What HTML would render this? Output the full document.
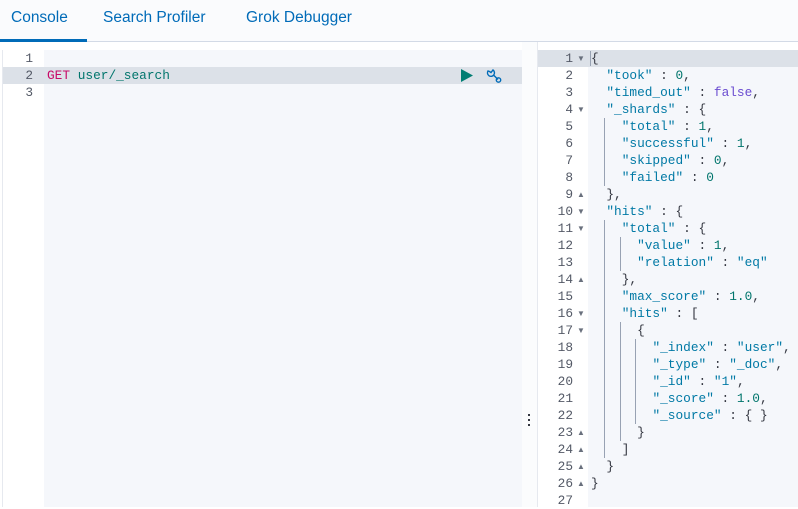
<!DOCTYPE html>
<html><head><meta charset="utf-8"><style>
*{margin:0;padding:0;box-sizing:border-box}
body{width:798px;height:507px;overflow:hidden;background:#fff;font-family:"Liberation Sans",sans-serif;position:relative}
.tabs{position:absolute;left:0;top:0;width:798px;height:42px;background:#fafbfd;border-bottom:1px solid #d3dae6}
.tab{position:absolute;top:9px;font-size:15.5px;color:#006bb8}
.ul{position:absolute;left:0;top:39px;width:87px;height:3px;background:#006bb8}
.mono{font-family:"Liberation Mono",monospace;font-size:12.8px;line-height:17px;white-space:pre}
.ln{position:absolute;text-align:right;color:#535966}
.row{position:absolute;height:17px}
.s{color:#0079a5}.n{color:#00756c}.b{color:#6a4cd0}.p{color:#343741}
.g{position:absolute;width:1px;background:#98a2b3}
.ar{font-size:8px;color:#69707d;position:absolute}
</style></head><body>
<div class="tabs">
<div class="tab" style="left:11px">Console</div>
<div class="tab" style="left:103px">Search Profiler</div>
<div class="tab" style="left:246px">Grok Debugger</div>
<div class="ul"></div>
</div>
<!-- left editor -->
<div style="position:absolute;left:2px;top:50px;width:1px;height:457px;background:#e6e9ef"></div>
<div style="position:absolute;left:3px;top:50px;width:41px;height:457px;background:#fff"></div>
<div style="position:absolute;left:44px;top:50px;width:478px;height:457px;background:#f5f7fb"></div>
<div class="row" style="left:3px;top:67px;width:519px;background:#dce1e8"></div>
<div class="mono ln" style="left:3px;top:50px;width:30px">1
2
3</div>
<div class="mono" style="position:absolute;left:47px;top:67px"><span style="color:#c80a68">GET</span> <span class="n">user/_search</span></div>
<svg style="position:absolute;left:460px;top:68px" width="14" height="15"><path d="M1 1 L13 7.5 L1 14Z" fill="#017d73"/></svg>
<svg style="position:absolute;left:485px;top:67px" width="18" height="18" viewBox="0 0 18 18" fill="none" stroke="#006bb8" stroke-width="1.4"><path d="M3 4 A3.5 3.5 0 1 0 8 3 L6 5.5 L4.5 4.5Z M8.5 8 L13 12.5"/><circle cx="13.5" cy="13" r="2.2"/></svg>
<!-- divider -->
<div style="position:absolute;left:522px;top:42px;width:15px;height:465px;background:#fbfcfd"></div>
<div style="position:absolute;left:528px;top:414px;width:2px;height:2px;background:#343741;box-shadow:0 5px 0 #343741,0 10px 0 #343741"></div>
<div style="position:absolute;left:537px;top:42px;width:1px;height:465px;background:#e6e9ef"></div>
<!-- right -->
<div style="position:absolute;left:538px;top:50px;width:50px;height:457px;background:#fff"></div>
<div style="position:absolute;left:588px;top:50px;width:210px;height:457px;background:#f5f7fb"></div>
<div class="row" style="left:538px;top:50px;width:260px;background:#dce1e8"></div>
<div class="mono ln" style="left:538px;top:50px;width:35px"><script>document.write(Array.from({length:27},(_, i)=>i+1).join("\n"))</script></div>
<div class="ar" style="left:577px;top:54px">▼</div><div class="ar" style="left:577px;top:105px">▼</div><div class="ar" style="left:577px;top:190px">▲</div><div class="ar" style="left:577px;top:207px">▼</div><div class="ar" style="left:577px;top:224px">▼</div><div class="ar" style="left:577px;top:275px">▲</div><div class="ar" style="left:577px;top:309px">▼</div><div class="ar" style="left:577px;top:326px">▼</div><div class="ar" style="left:577px;top:428px">▲</div><div class="ar" style="left:577px;top:445px">▲</div><div class="ar" style="left:577px;top:462px">▲</div><div class="ar" style="left:577px;top:479px">▲</div>
<div class="g" style="left:590px;top:51px;height:15px"></div>
<div class="g" style="left:604px;top:118px;height:68px"></div>
<div class="g" style="left:604px;top:220px;height:238px"></div>
<div class="g" style="left:620px;top:237px;height:34px"></div>
<div class="g" style="left:620px;top:322px;height:119px"></div>
<div class="g" style="left:635px;top:339px;height:85px"></div>
<div class="mono p" style="position:absolute;left:591px;top:50px">{
  <span class="s">"took"</span> : <span class="n">0</span>,
  <span class="s">"timed_out"</span> : <span class="b">false</span>,
  <span class="s">"_shards"</span> : {
    <span class="s">"total"</span> : <span class="n">1</span>,
    <span class="s">"successful"</span> : <span class="n">1</span>,
    <span class="s">"skipped"</span> : <span class="n">0</span>,
    <span class="s">"failed"</span> : <span class="n">0</span>
  },
  <span class="s">"hits"</span> : {
    <span class="s">"total"</span> : {
      <span class="s">"value"</span> : <span class="n">1</span>,
      <span class="s">"relation"</span> : <span class="s">"eq"</span>
    },
    <span class="s">"max_score"</span> : <span class="n">1.0</span>,
    <span class="s">"hits"</span> : [
      {
        <span class="s">"_index"</span> : <span class="s">"user"</span>,
        <span class="s">"_type"</span> : <span class="s">"_doc"</span>,
        <span class="s">"_id"</span> : <span class="s">"1"</span>,
        <span class="s">"_score"</span> : <span class="n">1.0</span>,
        <span class="s">"_source"</span> : { }
      }
    ]
  }
}</div>
</body></html>
